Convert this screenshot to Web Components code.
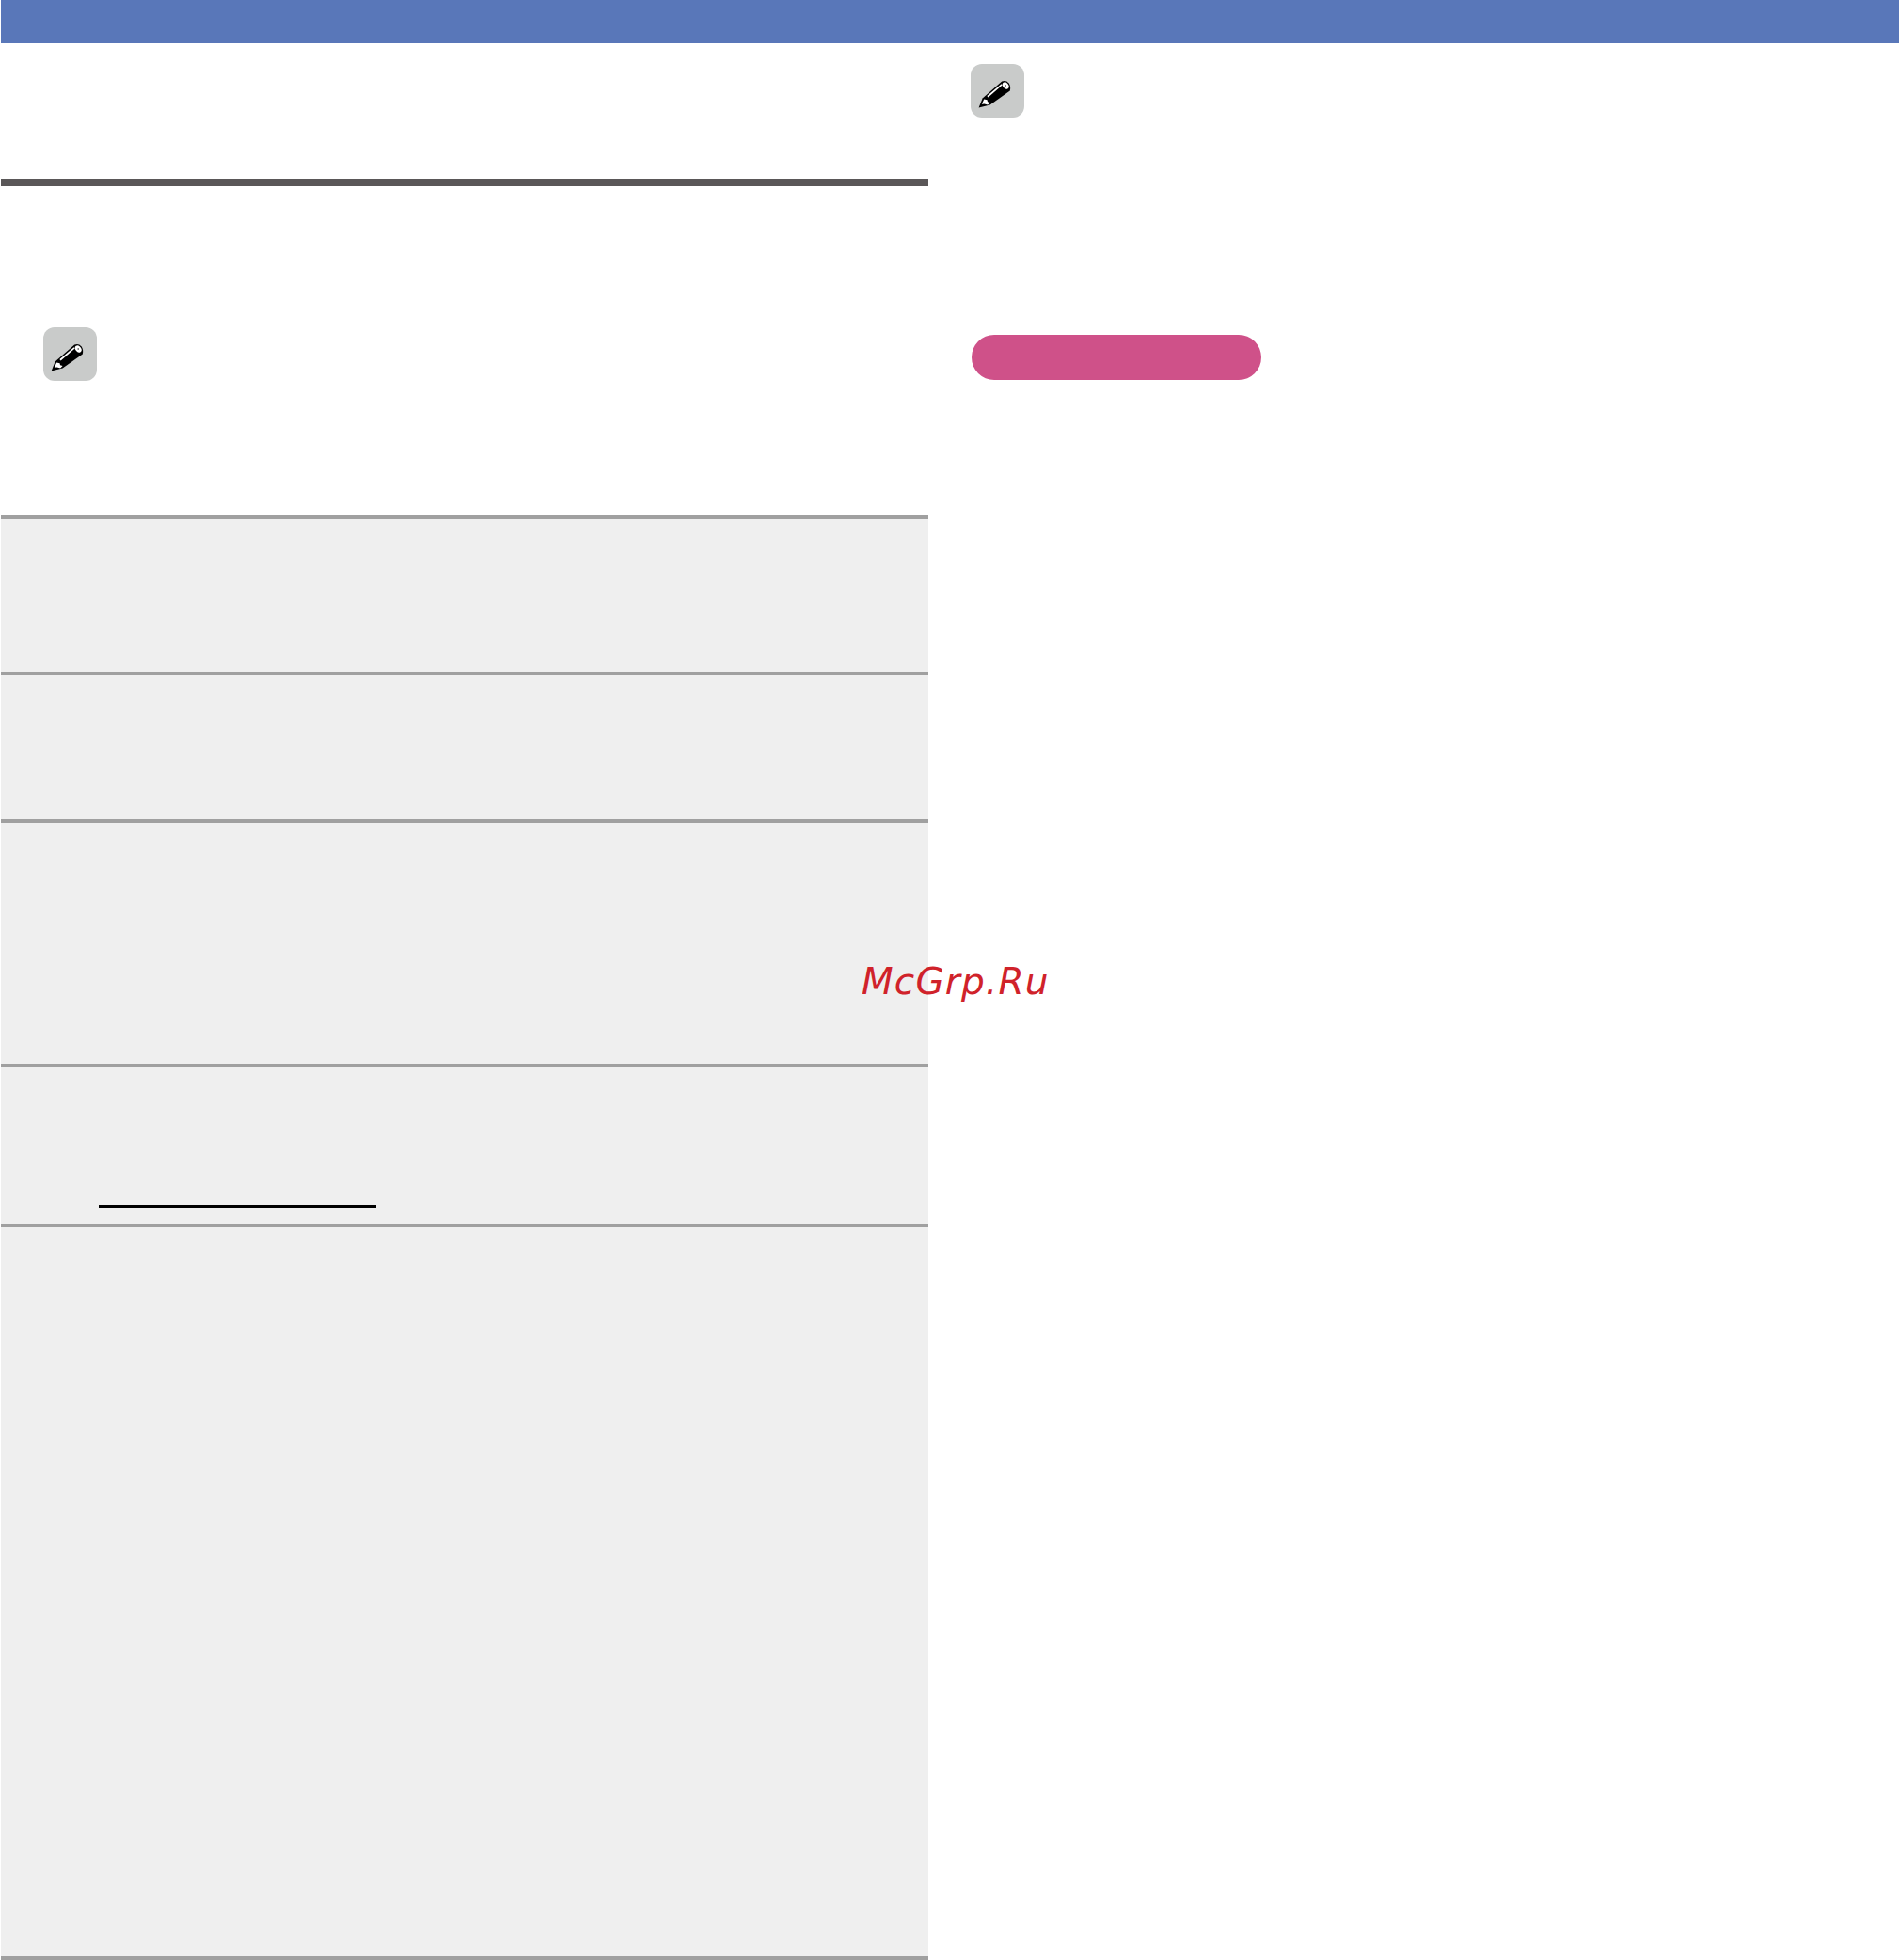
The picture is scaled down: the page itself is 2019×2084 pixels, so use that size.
<!DOCTYPE html>
<html>
<head>
<meta charset="utf-8">
<title>Manual page</title>
<style>
    html, body { margin: 0; padding: 0; background: #fff; }
</style>
</head>
<body>
<manual-page>
    <page-banner></page-banner>
    <page-column slot="left">
        <section-rule></section-rule>
        <note-icon style="--top: 150px"></note-icon>
        <spec-table>
            <spec-row style="--h: 166px"></spec-row>
            <spec-row style="--h: 157px"></spec-row>
            <spec-row style="--h: 260px"></spec-row>
            <spec-row style="--h: 170px"><link-line></link-line></spec-row>
            <spec-row style="--h: 779px"></spec-row>
        </spec-table>
    </page-column>
    <page-column slot="right">
        <note-icon style="--top: 22px"></note-icon>
        <pill-label></pill-label>
    </page-column>
    <water-mark slot="overlay">McGrp.Ru</water-mark>
</manual-page>

<template id="note-icon-template">
    <style>
        :host { display: block; width: 57px; height: 57px; margin: var(--top, 0) 0 0 45px; }
        .box { width: 57px; height: 57px; border-radius: 12px; background: #c9cbca; }
        svg { display: block; }
    </style>
    <div class="box">
        <svg width="57" height="57" viewBox="0 0 57 57">
            <!-- pencil body -->
            <path d="M8.6 46.4 L12.6 36.4 L33.2 18.6 Q37.6 17 40.6 20.4 Q43 24 41.8 28.6 L20.6 43.6 Z" fill="#000"/>
            <!-- highlight along the top edge -->
            <path d="M17.4 34 L32.6 21.2 L33.6 22.6 L18.6 35.4 Z" fill="#fff"/>
            <!-- cut wood near the tip -->
            <path d="M11.8 42.8 L14.2 37.6 L17.6 38.2 L18 40.2 L20.6 41 L18.2 43.6 L14.6 42.4 Z" fill="#fff"/>
            <!-- end cap -->
            <ellipse cx="37.2" cy="23" rx="3" ry="4" transform="rotate(-38 37.2 23)" fill="#fff"/>
            <circle cx="37.2" cy="23" r="0.8" fill="#333"/>
        </svg>
    </div>
</template>

<script>
"use strict";

/**
 * Defines a custom element whose shadow root is set from a string
 * @param {string} name - Tag name
 * @param {string} html - Shadow markup and styles
 */
const defineElement = (name, html) => {
    customElements.define(name, class extends HTMLElement {
        constructor() {
            super();
            this.attachShadow({ mode: 'open' }).innerHTML = html;
        }
    });
};

defineElement('manual-page', `
    <style>
        :host { display: block; position: relative; width: 2019px; height: 2084px; overflow: hidden; box-sizing: border-box; padding-left: 1px; background: #fff; }
        .columns { display: grid; grid-template-columns: 986px 1fr; }
    </style>
    <slot></slot>
    <div class="columns">
        <slot name="left"></slot>
        <slot name="right"></slot>
    </div>
    <slot name="overlay"></slot>
`);

defineElement('page-banner', `
    <style>
        :host { display: block; height: 46px; background: #5977b9; }
    </style>
`);

defineElement('page-column', `
    <style>
        :host { display: block; }
    </style>
    <slot></slot>
`);

defineElement('section-rule', `
    <style>
        :host { display: block; margin-top: 144px; height: 8px; background: #5a5758; }
    </style>
`);

// Note icon keeps its markup in a template
const noteTemplate = document.getElementById('note-icon-template');

class NoteIcon extends HTMLElement {
    constructor() {
        super();
        this.attachShadow({ mode: 'open' }).appendChild(noteTemplate.content.cloneNode(true));
    }
}
customElements.define('note-icon', NoteIcon);

defineElement('spec-table', `
    <style>
        :host { display: block; margin-top: 143px; border-bottom: 4px solid #a0a0a0; }
    </style>
    <slot></slot>
`);

defineElement('spec-row', `
    <style>
        :host { display: flex; flex-direction: column; box-sizing: border-box; height: var(--h); border-top: 4px solid #a0a0a0; background: #efefef; }
    </style>
    <slot></slot>
`);

defineElement('link-line', `
    <style>
        :host { display: block; width: 295px; height: 3px; margin: 146px 0 0 104px; background: #000; }
    </style>
`);

defineElement('pill-label', `
    <style>
        :host { display: block; width: 308px; height: 48px; margin: 231px 0 0 46px; border-radius: 24px; background: #cf5189; }
    </style>
`);

defineElement('water-mark', `
    <style>
        :host { position: absolute; left: 916px; top: 1021px; font: oblique 39px/45px "DejaVu Sans", sans-serif; color: #d0222a; letter-spacing: 1.15px; white-space: nowrap; }
    </style>
    <slot></slot>
`);
</script>
</body>
</html>
